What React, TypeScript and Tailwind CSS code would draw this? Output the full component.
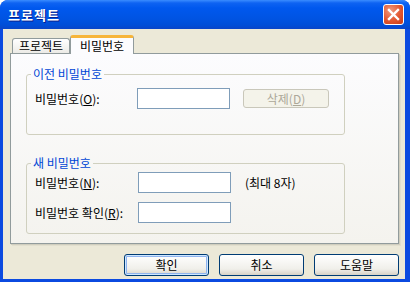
export default function App() {
   return (
      <div className="w-[410px] h-[282px] flex flex-col bg-[#0B4AE0] rounded-t-[8px] overflow-hidden font-['Noto_Sans_CJK_KR',sans-serif] text-[12px] text-black">
         {/* title bar */}
         <div className="h-[29px] flex items-center justify-between pl-[8px] pr-[6px] bg-[linear-gradient(to_bottom,#3A8CFF_0px,#0E63F2_3px,#0058EE_8px,#0054E3_18px,#004ED8_25px,#0A45C8_29px)]">
            <span className="text-white font-bold text-[13px] tracking-[1px] [text-shadow:1px_1px_0_#0A1E8C]">
               프로젝트
            </span>
            <div className="w-[21px] h-[21px] rounded-[3px] border border-white flex items-center justify-center bg-[radial-gradient(circle_at_35%_30%,#F09A7E,#E2562F_55%,#C63A16)]">
               <svg width="13" height="13" viewBox="0 0 13 13">
                  <path d="M2 2 L11 11 M11 2 L2 11" stroke="white" strokeWidth="2.4" strokeLinecap="square" />
               </svg>
            </div>
         </div>

         {/* body */}
         <div className="flex-1 ml-[3px] mr-[5px] mb-[3px] bg-[#ECE9D8] flex flex-col pt-[6px] pl-[7px] pr-[6px]">
            {/* tabs */}
            <div className="flex items-end h-[18px] pl-[2px]">
               <div className="w-[58px] h-[15px] border border-b-0 border-[#919B9C] rounded-t-[3px] bg-[linear-gradient(to_bottom,#FFFFFF,#ECEBE6)] flex items-center justify-center leading-none">
                  프로젝트
               </div>
               <div className="relative z-10 -mb-[1px] w-[64px] h-[19px] border-x border-[#919B9C] border-t-[3px] border-t-[#F7B53A] rounded-t-[3px] bg-[#FCFCFE] flex items-center justify-center leading-none">
                  비밀번호
               </div>
            </div>

            {/* panel */}
            <div className="h-[191px] border border-[#919B9C] bg-[linear-gradient(to_bottom,#FCFCFE,#F4F3EE)] shadow-[1px_1px_0_#D0CEBF,2px_2px_0_#E2DFCE] pl-[15px] pt-[13px]">
               <fieldset className="w-[319px] border border-[#D0D0BF] rounded-[3px] pl-[8px] pt-[7px] pb-[25px]">
                  <legend className="-ml-[4px] px-[2px] h-[14px] leading-[14px] text-[#0046D5]">
                     이전 비밀번호
                  </legend>
                  <div className="flex items-center h-[21px]">
                     <span className="w-[102px]">
                        비밀번호(<span className="underline">O</span>):
                     </span>
                     <div className="w-[93px] h-[21px] border border-[#7F9DB9] bg-white" />
                     <div className="ml-[13px] w-[86px] h-[19px] border border-[#C9C7BA] rounded-[3px] bg-[#F4F3EA] text-[#ACA899] flex items-center justify-center">
                        삭제(<span className="underline">D</span>)
                     </div>
                  </div>
               </fieldset>

               <fieldset className="mt-[21px] w-[319px] border border-[#D0D0BF] rounded-[3px] pl-[8px] pt-[2px] pb-[10px]">
                  <legend className="-ml-[4px] px-[2px] h-[14px] leading-[14px] text-[#0046D5]">
                     새 비밀번호
                  </legend>
                  <div className="flex flex-col gap-[9px]">
                     <div className="flex items-center h-[21px]">
                        <span className="w-[103px]">
                           비밀번호(<span className="underline">N</span>):
                        </span>
                        <div className="w-[93px] h-[21px] border border-[#7F9DB9] bg-white" />
                        <span className="ml-[14px]">(최대 8자)</span>
                     </div>
                     <div className="flex items-center h-[21px]">
                        <span className="w-[103px]">
                           비밀번호 확인(<span className="underline">R</span>):
                        </span>
                        <div className="w-[93px] h-[21px] border border-[#7F9DB9] bg-white" />
                     </div>
                  </div>
               </fieldset>
            </div>

            {/* buttons */}
            <div className="mt-[10px] flex justify-end gap-[10px]">
               <div className="w-[85px] h-[22px] border border-[#003C74] rounded-[3px] bg-[linear-gradient(to_bottom,#FFFFFF,#F0EFEA_70%,#D8D2C6)] shadow-[inset_0_0_0_1px_#CEE7FF,inset_0_0_0_2px_#8FB3EE] flex items-center justify-center">
                  확인
               </div>
               <div className="w-[85px] h-[22px] border border-[#003C74] rounded-[3px] bg-[linear-gradient(to_bottom,#FFFFFF,#F0EFEA_70%,#D8D2C6)] flex items-center justify-center">
                  취소
               </div>
               <div className="w-[85px] h-[22px] border border-[#003C74] rounded-[3px] bg-[linear-gradient(to_bottom,#FFFFFF,#F0EFEA_70%,#D8D2C6)] flex items-center justify-center">
                  도움말
               </div>
            </div>
         </div>
      </div>
   );
}
